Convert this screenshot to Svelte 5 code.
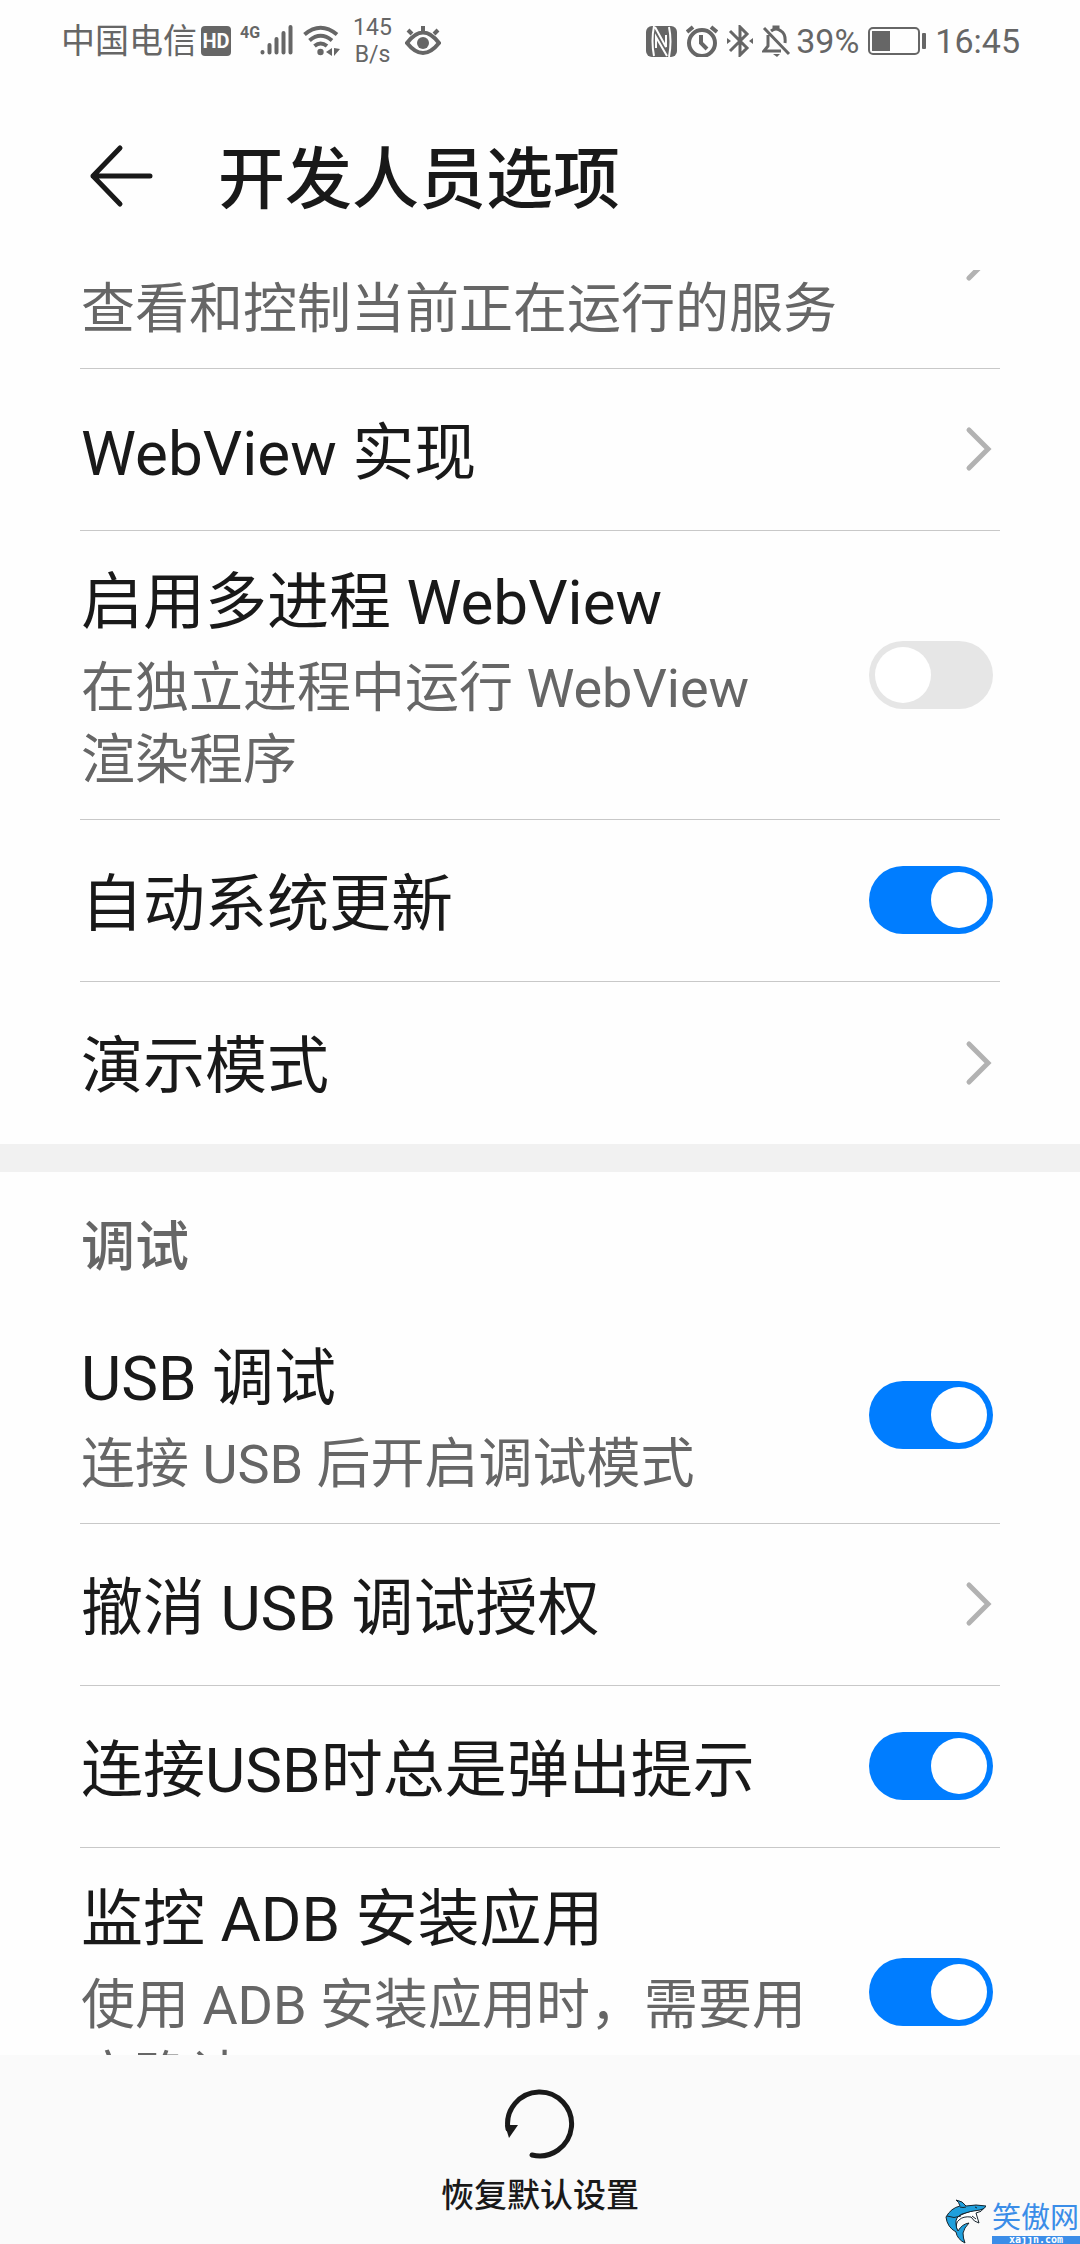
<script lang="ts">
  interface Row {
    id: string;
    title?: string;
    summary?: string;
    kind: 'link' | 'switch';
    on?: boolean;
  }

  let general: Row[] = $state([
    { id: 'running', summary: '查看和控制当前正在运行的服务', kind: 'link' },
    { id: 'webview', title: 'WebView 实现', kind: 'link' },
    { id: 'multiprocess', title: '启用多进程 WebView', summary: '在独立进程中运行 WebView 渲染程序', kind: 'switch', on: false },
    { id: 'autoupdate', title: '自动系统更新', kind: 'switch', on: true },
    { id: 'demo', title: '演示模式', kind: 'link' },
  ]);

  let debugging: Row[] = $state([
    { id: 'usb', title: 'USB 调试', summary: '连接 USB 后开启调试模式', kind: 'switch', on: true },
    { id: 'revoke', title: '撤消 USB 调试授权', kind: 'link' },
    { id: 'prompt', title: '连接USB时总是弹出提示', kind: 'switch', on: true },
    { id: 'adb', title: '监控 ADB 安装应用', summary: '使用 ADB 安装应用时，需要用户确认', kind: 'switch', on: true },
  ]);

  const defaults: Record<string, boolean> = {
    multiprocess: false,
    autoupdate: true,
    usb: true,
    prompt: true,
    adb: true,
  };

  function restore() {
    for (const row of [...general, ...debugging]) {
      if (row.kind === 'switch') row.on = defaults[row.id];
    }
  }
</script>

{#snippet texts(row: Row)}
  <span class="texts">
    {#if row.title}<span class="title">{row.title}</span>{/if}
    {#if row.summary}<span class="summary">{row.summary}</span>{/if}
  </span>
{/snippet}

{#snippet rows(items: Row[])}
  {#each items as row (row.id)}
    {#if row.kind === 'switch'}
      <label class="row" class:single={!row.summary} for={row.id}>
        {@render texts(row)}
        <input id={row.id} class="switch" type="checkbox" role="switch" bind:checked={row.on} />
      </label>
    {:else}
      <button class="row" class:single={!row.summary} class:partial={!row.title} type="button">
        {@render texts(row)}
        <svg class="chevron" viewBox="0 0 28 48" aria-hidden="true">
          <path d="M4 5 L23 24 L4 43" />
        </svg>
      </button>
    {/if}
  {/each}
{/snippet}

<div class="screen">
  <div class="status">
    <div class="status-side">
      <span class="carrier">中国电信</span>
      <span class="hd">HD</span>
      <div class="signal">
        <span class="net">4G</span>
        <svg class="bars" viewBox="0 0 33 32" aria-hidden="true">
          <path d="M2.5 27v.5M9.5 20v7.500M16.500 14v13.500M23.500 8v19.500M30.500 2v25.500" />
        </svg>
      </div>
      <svg class="wifi" viewBox="0 0 38 32" aria-hidden="true">
        <path class="line" d="M2.5 9.500Q18.500-4 35 9.500M7.500 15.500Q18.500 6 30 15.500M12.500 21Q18.500 16 25 21" />
        <circle cx="18.500" cy="27" r="3.200" />
        <path d="M30 23v8l-6-4zM32 23l6 1-6 7z" />
      </svg>
      <span class="rate"><span>145</span><span>B/s</span></span>
      <svg class="eye" viewBox="0 0 36 32" aria-hidden="true">
        <path class="line" d="M2 18Q18-3 34 18Q18 38 2 18zM7 9L3 5M18 7V1M29 9l4-4" />
        <circle cx="18" cy="18" r="6" />
      </svg>
    </div>
    <div class="status-side">
      <svg class="nfc" viewBox="0 0 31 32" aria-hidden="true">
        <rect y="1" width="31" height="31" rx="6" />
        <path class="gap" d="M8 1Q5 16 8 31M9 2l11 20V10M23 32Q26 16 23 2M21 31L10 12v11" />
      </svg>
      <svg class="alarm" viewBox="0 0 32 32" aria-hidden="true">
        <path class="line" d="M29 18a13 13 0 1 1-26 0a13 13 0 1 1 26 0zM15 10v8l6 6M1 7l6-5M31 7l-6-5" />
      </svg>
      <svg class="bt" viewBox="0 0 26 32" aria-hidden="true">
        <path class="line thin" d="M3 6l17 17-7 7V2l7 7L3 26" />
        <path d="M0 13l4 3-4 3zM26 13l-4 3 4 3z" />
      </svg>
      <svg class="bell" viewBox="0 0 29 32" aria-hidden="true">
        <path class="line thin" d="M2 3l25 26M6 10v11l-4 5h17M9 6Q14 2 19 6Q24 9 23 18M12 4V2h4v2" />
        <path d="M11 29h7l-3 3z" />
      </svg>
      <span class="percent">39%</span>
      <svg class="battery" viewBox="0 0 58 30" aria-hidden="true">
        <rect class="case" x="1" y="2" width="50" height="26" rx="4" />
        <rect x="4" y="5" width="18" height="20" />
        <rect x="54" y="7" width="4" height="16" rx="1" />
      </svg>
      <span class="clock">16:45</span>
    </div>
  </div>

  <header class="header">
    <button class="back" type="button" aria-label="返回">
      <svg viewBox="0 0 66 66" aria-hidden="true">
        <path d="M32 5L5 33l27 28M5 33h57" />
      </svg>
    </button>
    <h1>开发人员选项</h1>
  </header>

  <main class="scroller">
    <section class="group scrolled">
      {@render rows(general)}
    </section>
    <section class="group divided">
      <h2>调试</h2>
      {@render rows(debugging)}
    </section>
  </main>

  <footer class="footer">
    <button class="restore" type="button" onclick={restore}>
      <svg viewBox="0 0 72 70" aria-hidden="true">
        <path class="arc" d="M4 40A32 32 0 1 1 28 66" />
        <path class="tip" d="M1 36h13L5 49z" />
      </svg>
      <span>恢复默认设置</span>
    </button>
  </footer>

  <div class="mark">
    <svg class="shark" viewBox="0 0 41 45" aria-hidden="true">
      <path class="belly" d="M9 20Q18 13 39 9Q37 13 31 14L34 24Q29 23 26 18Q18 17 14 21Q10 24 12 31Q6 28 9 20z" />
      <path class="skin" d="M1 18Q6 9 15 7Q14 3 11 1Q18 2 21 7Q31 5 41 7Q40 10 35 11Q25 12 17 15Q10 18 11 25Q11 29 13 32Q17 25 24 24Q19 29 18 34Q18 39 20 44Q12 40 11 33Q2 28 1 18z" />
      <path class="fold" d="M2 17Q9 20 16 17M15 8Q18 9 21 8M30 8l2 1M27 17L31 20" />
    </svg>
    <div class="mark-text">
      <span class="mark-name">笑傲网</span>
      <span class="mark-url">xajjn.com</span>
    </div>
  </div>
</div>

<style>
  :global(body) {
    margin: 0;
    background: #fefefe;
  }

  .screen {
    position: relative;
    display: flex;
    flex-direction: column;
    height: 100vh;
    overflow: hidden;
    background: #fefefe;
    color: #191919;
    font-family: Roboto, "Noto Sans CJK SC", sans-serif;
  }

  button {
    margin: 0;
    padding: 0;
    border: 0;
    background: none;
    color: inherit;
    font: inherit;
    text-align: left;
    cursor: pointer;
  }

  svg {
    display: block;
    flex: none;
  }

  /* Status bar */
  .status {
    display: flex;
    flex: none;
    justify-content: space-between;
    align-items: center;
    height: 82px;
    padding: 0 60px 0 61px;
    color: #666;
    font-size: 34px;
    line-height: 40px;
  }
  .status svg { fill: #666; height: 32px; }
  .status .line { fill: none; stroke: #666; stroke-width: 4; }
  .status .thin { stroke-width: 3; }
  .status-side {
    display: flex;
    align-items: center;
    gap: 9px;
  }
  .carrier { margin-right: -5px; }
  .hd {
    width: 30px;
    border-radius: 4px;
    background: #666;
    color: #fefefe;
    font-size: 20px;
    font-weight: 700;
    line-height: 30px;
    text-align: center;
  }
  .signal { display: flex; }
  .net {
    font-size: 16px;
    font-weight: 700;
    line-height: 16px;
  }
  .bars { width: 33px; }
  .bars path { stroke: #666; stroke-width: 4; stroke-linecap: round; }
  .wifi { width: 38px; }
  .rate {
    display: flex;
    flex-direction: column;
    margin: 0 4px;
    font-size: 23px;
    line-height: 27px;
    text-align: center;
  }
  .eye { width: 36px; }
  .nfc { width: 31px; }
  .nfc .gap { fill: none; stroke: #fefefe; stroke-width: 2; }
  .alarm { width: 32px; }
  .bt { width: 26px; }
  .bell { width: 29px; }
  .status .battery { width: 58px; height: 30px; }
  .case { fill: none; stroke: #666; stroke-width: 2; }
  .percent { margin-left: -4px; }

  /* Title bar */
  .header {
    display: flex;
    flex: none;
    align-items: center;
    gap: 64px;
    height: 188px;
    padding: 0 88px;
    box-sizing: border-box;
  }
  .back svg {
    width: 66px;
    height: 66px;
    fill: none;
    stroke: #191919;
    stroke-width: 5;
    stroke-linecap: round;
    stroke-linejoin: round;
  }
  h1 {
    margin: 0;
    padding-top: 8px;
    font-size: 67px;
    font-weight: 500;
    line-height: 80px;
  }

  /* List */
  .scroller {
    flex: 1;
    min-height: 0;
    overflow: hidden;
  }
  .group {
    display: flex;
    flex-direction: column;
    padding: 0 80px;
  }
  /* first row sits partly under the title bar */
  .scrolled { margin-top: -119px; }
  .divided { border-top: 28px solid #f1f1f1; }
  h2 {
    margin: 0;
    padding: 40px 0 23px 1px;
    color: #666;
    font-size: 54px;
    font-weight: 500;
    line-height: 72px;
  }
  .row {
    display: flex;
    align-items: center;
    justify-content: space-between;
    gap: 56px;
    min-height: 162px;
    padding: 21px 7px 22px 1px;
    border-bottom: 1px solid #c8c8c8;
    box-sizing: border-box;
    cursor: pointer;
  }
  .row:last-child { border-bottom: 0; }
  .partial { min-height: 218px; }
  .partial .texts { align-self: flex-end; }
  .texts {
    display: flex;
    flex: 1;
    flex-direction: column;
    min-width: 0;
  }
  .title {
    font-size: 62px;
    line-height: 101px;
  }
  .single .title { padding-top: 8px; }
  .summary {
    color: #666;
    font-size: 54px;
    line-height: 72px;
  }
  .chevron {
    width: 28px;
    height: 48px;
    fill: none;
    stroke: #b2b2b2;
    stroke-width: 5;
    stroke-linecap: round;
  }

  .switch {
    flex: none;
    appearance: none;
    width: 124px;
    height: 68px;
    margin: 0;
    padding: 6px;
    border-radius: 34px;
    background: #e6e6e6;
    box-sizing: border-box;
    cursor: pointer;
  }
  .switch::before {
    content: '';
    display: block;
    width: 56px;
    height: 56px;
    border-radius: 50%;
    background: #fff;
  }
  .switch:checked { background: #007dff; }
  .switch:checked::before { margin-left: auto; }

  /* Bottom bar */
  .footer {
    display: flex;
    flex: none;
    justify-content: center;
    padding: 34px 0 24px;
    background: #fafafa;
  }
  .restore {
    display: flex;
    flex-direction: column;
    align-items: center;
    gap: 12px;
    font-size: 33px;
    font-weight: 500;
    line-height: 49px;
  }
  .restore svg { width: 72px; height: 70px; }
  .arc { fill: none; stroke: #191919; stroke-width: 5; stroke-linecap: round; }
  .tip { fill: #191919; }

  /* Site mark over the bottom bar */
  .mark {
    position: absolute;
    right: 0;
    bottom: 0;
    display: flex;
    align-items: flex-end;
    gap: 6px;
  }
  .shark { width: 41px; height: 45px; }
  .shark path { stroke: #16232c; stroke-width: 1; }
  .skin { fill: #1f9fdc; }
  .shark .belly { fill: #fff; }
  .shark .fold { fill: none; }
  .mark-text {
    display: flex;
    flex-direction: column;
    width: 88px;
    color: #3b8de8;
  }
  .mark-name {
    font-size: 29px;
    line-height: 36px;
    white-space: nowrap;
  }
  .mark-url {
    background: #3b8de8;
    color: #fff;
    font-family: "DejaVu Sans Mono", monospace;
    font-size: 10px;
    font-weight: 700;
    line-height: 8px;
    text-align: center;
  }
</style>
